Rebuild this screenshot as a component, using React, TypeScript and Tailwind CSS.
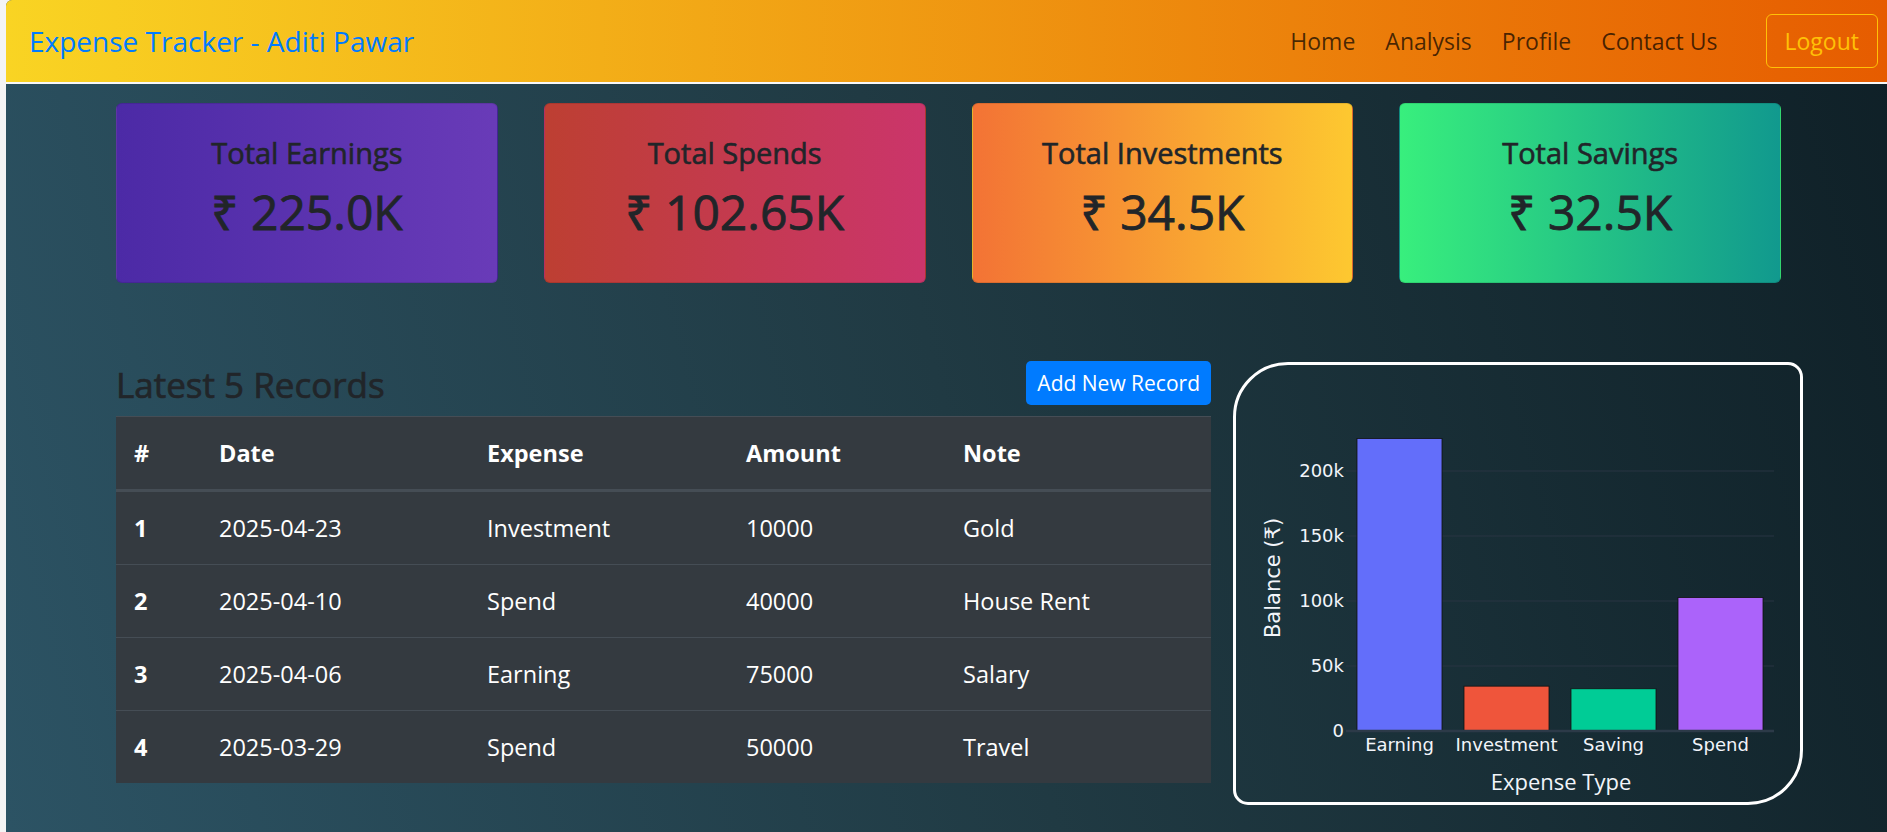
import React from "react";

const font = { fontFamily: '"Open Sans", "Noto Sans", sans-serif' };

const cards = [
    { title: "Total Earnings", value: "₹ 225.0K", bg: "bg-[linear-gradient(to_right,#4c2aa6,#693bb8)]" },
    { title: "Total Spends", value: "₹ 102.65K", bg: "bg-[linear-gradient(to_right,#bd3f32,#cb356b)]" },
    { title: "Total Investments", value: "₹ 34.5K", bg: "bg-[linear-gradient(to_right,#f37335,#fdc830)]" },
    { title: "Total Savings", value: "₹ 32.5K", bg: "bg-[linear-gradient(to_right,#38ef7d,#11998e)]" },
];

const records = [
    { id: 1, date: "2025-04-23", expense: "Investment", amount: "10000", note: "Gold" },
    { id: 2, date: "2025-04-10", expense: "Spend", amount: "40000", note: "House Rent" },
    { id: 3, date: "2025-04-06", expense: "Earning", amount: "75000", note: "Salary" },
    { id: 4, date: "2025-03-29", expense: "Spend", amount: "50000", note: "Travel" },
];

const bars = [
    { label: "Earning", value: 225, color: "#636efa" },
    { label: "Investment", value: 34.5, color: "#ef553b" },
    { label: "Saving", value: 32.5, color: "#00cc96" },
    { label: "Spend", value: 102.65, color: "#ab63fa" },
];

// plot area inside the chart card (card inner coords)
const zeroY = 366;
const pxPerK = 1.3;
const plotLeft = 110;
const plotRight = 538;
const band = 107;
const yOf = (k: number) => zeroY - k * pxPerK;

const Chart = () => {
    const tick = { fontFamily: '"DejaVu Sans", Verdana, sans-serif', fontSize: 18, fill: "#f2f5fa" };
    return (
        <svg width="564" height="437" viewBox="0 0 564 437" className="block">
            {[50, 100, 150, 200].map(k => (
                <line key={k} x1={plotLeft} x2={plotRight} y1={yOf(k)} y2={yOf(k)} stroke="#283442" strokeWidth="1" />
            ))}
            {bars.map((b, i) => {
                const cx = plotLeft + band / 2 + band * i;
                return (
                    <rect key={b.label} x={cx - 42.5} y={yOf(b.value)} width="85" height={b.value * pxPerK}
                        fill={b.color} stroke="#111111" strokeWidth="0.8" />
                );
            })}
            <line x1={plotLeft} x2={plotRight} y1={zeroY} y2={zeroY} stroke="#2c3a48" strokeWidth="2.5" />
            {[0, 50, 100, 150, 200].map(k => (
                <text key={k} x="108" y={yOf(k)} dy="0.36em" textAnchor="end" style={tick}>
                    {k === 0 ? "0" : `${k}k`}
                </text>
            ))}
            {bars.map((b, i) => (
                <text key={b.label} x={plotLeft + band / 2 + band * i} y="380" dy="0.36em" textAnchor="middle" style={tick}>
                    {b.label}
                </text>
            ))}
            <text x="325" y="417" dy="0.36em" textAnchor="middle"
                style={{ fontFamily: '"Open Sans", sans-serif', fontSize: 22, fill: "#f2f5fa" }}>
                Expense Type
            </text>
            <text x="36" y="213" dy="0.36em" textAnchor="middle" transform="rotate(-90 36 213)"
                style={{ ...tick, fontSize: 21 }}>
                Balance (₹)
            </text>
        </svg>
    );
};

export default function App() {
    return (
        <div className="min-h-[832px] bg-[#f4f4f4] pl-[6px]" style={font}>
            <div className="min-h-[832px] flex flex-col rounded-tl-[6px] overflow-hidden bg-[linear-gradient(75deg,#2c5364_0%,#203a43_50%,#0f2027_100%)]">
                <nav className="h-[84px] flex items-center border-b-2 border-[#f8f8f8] bg-[linear-gradient(to_right,#f9d423,#e65c00)] pl-[23px] pr-[9px]">
                    <span className="text-[28px] leading-[36px] text-[#007bff]">Expense Tracker - Aditi Pawar</span>
                    <div className="ml-auto flex items-center gap-[30px] text-[23px] leading-[36px] text-black/70">
                        <span>Home</span>
                        <span>Analysis</span>
                        <span>Profile</span>
                        <span>Contact Us</span>
                        <button className="ml-[18px] h-[54px] px-[18px] border-[1.5px] border-[#ffc107] rounded-[6px] text-[#ffc107] text-[23px]">
                            Logout
                        </button>
                    </div>
                </nav>

                <div className="ml-[110px] w-[1687px]">
                    <div className="mt-[19px] w-[1665px] grid grid-cols-4 gap-[46px]">
                        {cards.map(c => (
                            <div key={c.title} className={`h-[180px] rounded-[6px] border border-black/10 ${c.bg} pt-[31px] flex flex-col items-center text-[#212529]`}>
                                <div className="text-[29px] leading-[36px] [-webkit-text-stroke:0.6px_#212529]">{c.title}</div>
                                <div className="mt-[12px] text-[48px] leading-[58px] [-webkit-text-stroke:0.8px_#212529]">{c.value}</div>
                            </div>
                        ))}
                    </div>

                    <div className="mt-[78px] flex gap-[22px] items-start">
                        <div className="w-[1095px]">
                            <div className="h-[44px] flex items-center justify-between">
                                <h3 className="pt-[2px] text-[35px] leading-[43px] text-[#212529] [-webkit-text-stroke:0.7px_#212529]">Latest 5 Records</h3>
                                <button className="h-[44px] px-[11px] rounded-[5px] bg-[#007bff] text-white text-[21px] leading-[31px]">
                                    Add New Record
                                </button>
                            </div>
                            <table className="mt-[11px] w-full border-collapse bg-[#343a40] text-white text-[23.5px] leading-[36px] text-left">
                                <thead>
                                    <tr>
                                        <th className="w-[85px] px-[18px] py-[18px] font-bold border-t border-b-[3px] border-[#454d55]">#</th>
                                        <th className="w-[268px] px-[18px] py-[18px] font-bold border-t border-b-[3px] border-[#454d55]">Date</th>
                                        <th className="w-[259px] px-[18px] py-[18px] font-bold border-t border-b-[3px] border-[#454d55]">Expense</th>
                                        <th className="w-[217px] px-[18px] py-[18px] font-bold border-t border-b-[3px] border-[#454d55]">Amount</th>
                                        <th className="px-[18px] py-[18px] font-bold border-t border-b-[3px] border-[#454d55]">Note</th>
                                    </tr>
                                </thead>
                                <tbody>
                                    {records.map(r => (
                                        <tr key={r.id}>
                                            <td className="px-[18px] py-[18px] font-bold border-t border-[#454d55]">{r.id}</td>
                                            <td className="px-[18px] py-[18px] border-t border-[#454d55]">{r.date}</td>
                                            <td className="px-[18px] py-[18px] border-t border-[#454d55]">{r.expense}</td>
                                            <td className="px-[18px] py-[18px] border-t border-[#454d55]">{r.amount}</td>
                                            <td className="px-[18px] py-[18px] border-t border-[#454d55]">{r.note}</td>
                                        </tr>
                                    ))}
                                </tbody>
                            </table>
                        </div>

                        <div className="mt-px w-[570px] h-[443px] border-[3px] border-white rounded-tl-[55px] rounded-br-[55px] rounded-tr-[15px] rounded-bl-[15px]">
                            <Chart />
                        </div>
                    </div>
                </div>
            </div>
        </div>
    );
}
